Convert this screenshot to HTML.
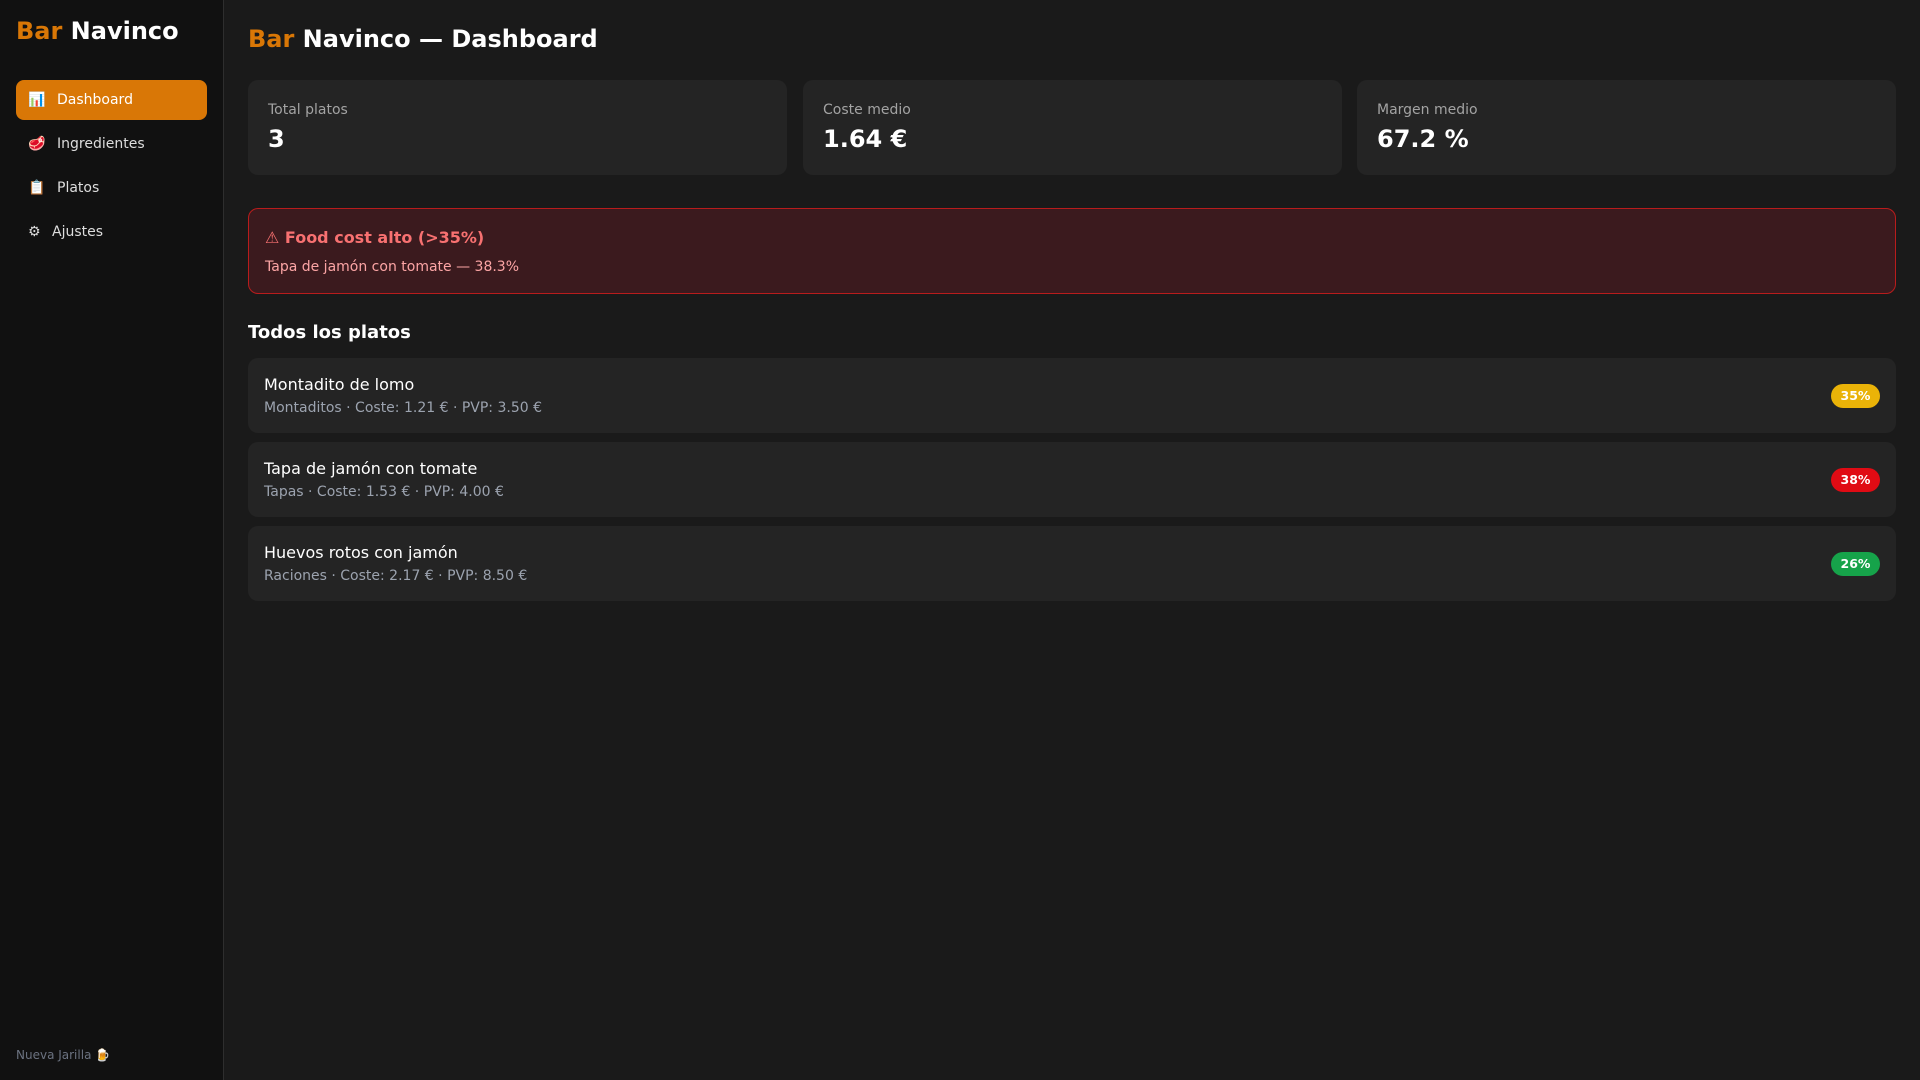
<!DOCTYPE html>
<html><head><meta charset="utf-8"><style>
*{box-sizing:border-box;margin:0;padding:0}
body{width:1920px;height:1080px;background:#1a1a1a;font-family:"DejaVu Sans","Liberation Sans",sans-serif;color:#fff;position:relative;overflow:hidden}
.side{position:absolute;left:0;top:0;width:224px;height:1080px;background:#111;border-right:1px solid #2e2e2e}
.logo{position:absolute;left:16px;top:17px;font-size:24px;font-weight:bold}
.o{color:#d97706}
.nav{position:absolute;left:16px;width:191px;height:40px;border-radius:8px;font-size:14px;color:#ddd;display:flex;align-items:center;padding-left:12px}
.nav .i{width:29px;font-size:14px}
.act{background:#d97706;color:#fff}
.foot{position:absolute;left:16px;top:1048px;font-size:12px;color:#6b7280}
h1{position:absolute;left:248px;top:25px;font-size:24px;font-weight:bold}
.card{position:absolute;top:80px;height:95px;width:539px;background:#242424;border-radius:10px;padding:22px 20px}
.card .l{font-size:14px;color:#a3a3a3}
.card .v{font-size:24px;font-weight:bold;margin-top:7px}
.alert{position:absolute;left:248px;top:208px;width:1648px;height:86px;background:#3b1a1e;border:1px solid #b91c1c;border-radius:10px;padding:19px 16px}
.alert .t{color:#f87171;font-size:16px;font-weight:bold}
.alert .s{color:#fca5a5;font-size:14px;margin-top:12px}
h2{position:absolute;left:248px;top:322px;font-size:18px;font-weight:bold}
.row{position:absolute;left:248px;width:1648px;height:75px;background:#242424;border-radius:10px;padding:17px 16px}
.row .n{font-size:16px}
.row .m{font-size:14px;color:#9ca3af;margin-top:6px}
.b{position:absolute;right:16px;top:26px;width:49px;height:24px;border-radius:12px;font-size:12.5px;font-weight:bold;text-align:center;line-height:24px}
</style></head><body>
<div class="side">
<div class="logo"><span class="o">Bar</span> Navinco</div>
<div class="nav act" style="top:80px"><span class="i">📊</span>Dashboard</div>
<div class="nav" style="top:124px"><span class="i">🥩</span>Ingredientes</div>
<div class="nav" style="top:168px"><span class="i">📋</span>Platos</div>
<div class="nav" style="top:212px"><span class="i" style="width:24px">⚙</span>Ajustes</div>
<div class="foot">Nueva Jarilla 🍺</div>
</div>
<h1><span class="o">Bar</span> Navinco — Dashboard</h1>
<div class="card" style="left:248px"><div class="l">Total platos</div><div class="v">3</div></div>
<div class="card" style="left:803px"><div class="l">Coste medio</div><div class="v">1.64 €</div></div>
<div class="card" style="left:1357px"><div class="l">Margen medio</div><div class="v">67.2 %</div></div>
<div class="alert"><div class="t">⚠ Food cost alto (&gt;35%)</div><div class="s">Tapa de jamón con tomate — 38.3%</div></div>
<h2>Todos los platos</h2>
<div class="row" style="top:358px"><div class="n">Montadito de lomo</div><div class="m">Montaditos · Coste: 1.21 € · PVP: 3.50 €</div><div class="b" style="background:#eab308">35%</div></div>
<div class="row" style="top:442px"><div class="n">Tapa de jamón con tomate</div><div class="m">Tapas · Coste: 1.53 € · PVP: 4.00 €</div><div class="b" style="background:#e00b14">38%</div></div>
<div class="row" style="top:526px"><div class="n">Huevos rotos con jamón</div><div class="m">Raciones · Coste: 2.17 € · PVP: 8.50 €</div><div class="b" style="background:#16a34a">26%</div></div>
</body></html>
